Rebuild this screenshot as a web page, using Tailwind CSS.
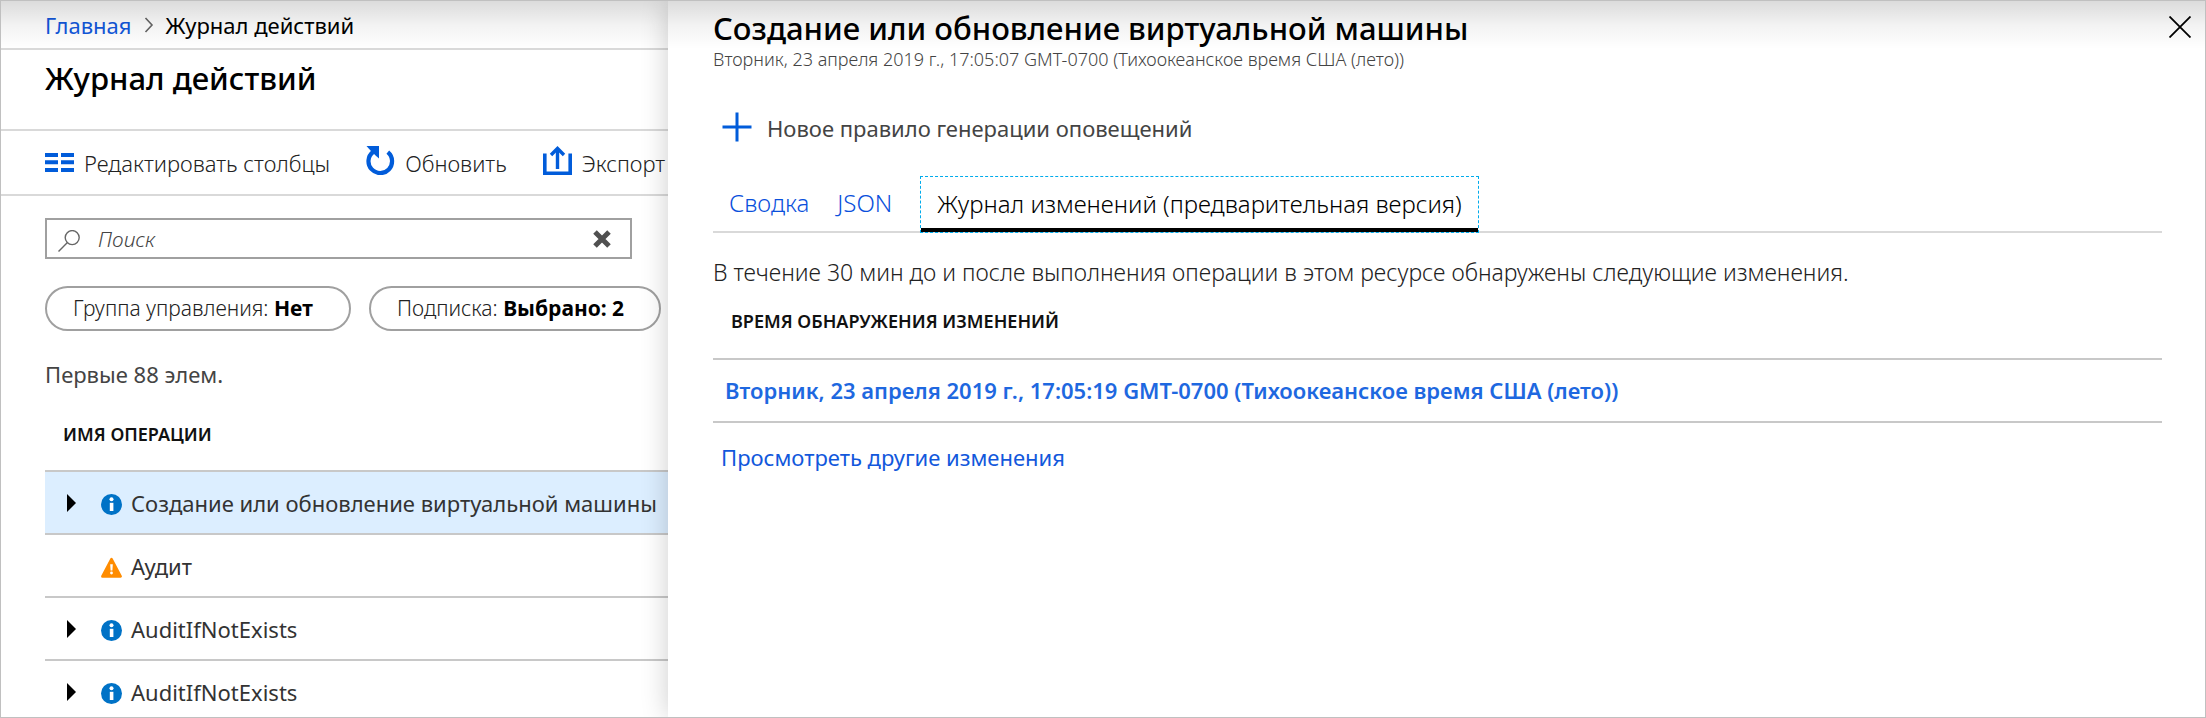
<!DOCTYPE html>
<html lang="ru">
<head>
<meta charset="utf-8">
<meta name="viewport" content="width=device-width, initial-scale=1">
<title>Журнал действий</title>
<script src="https://cdn.jsdelivr.net/npm/@tailwindcss/browser@4"></script>
</head>
<body class="bg-white font-['Noto_Sans','Open_Sans',sans-serif] text-[22px] leading-8 text-[#444]">
<svg class="hidden" aria-hidden="true">
  <symbol id="info" viewBox="0 0 21 21"><circle cx="10.5" cy="10.5" r="10.5" fill="#0072c6"/><circle cx="10.5" cy="5.3" r="2" fill="#fff"/><path d="M8.8 8.8h3.6v8.2H8.800z" fill="#fff"/></symbol>
  <symbol id="warn" viewBox="0 0 21 21"><path d="M10.5 2.2 19.6 19.4H1.400z" fill="#ff8c00" stroke="#ff8c00" stroke-width="2.6" stroke-linejoin="round"/><path d="M9.2 7.2h2.600l-.4 6.400H9.600z" fill="#fff"/><circle cx="10.5" cy="16" r="1.4" fill="#fff"/></symbol>
  <symbol id="expand" viewBox="0 0 9 18"><path d="M0 0 9 9 0 18z" fill="#000"/></symbol>
</svg>
<div class="relative flex h-screen overflow-hidden border border-[#c0c0c0]">

  <main class="w-[667px] shrink-0 overflow-hidden whitespace-nowrap">
    <nav class="flex h-[49px] items-center border-b-2 border-[#d9d9d9] pl-11" aria-label="Навигация">
      <a href="#" class="text-[#1258dc]">Главная</a>
      <svg class="mx-3 h-4 w-2.5" viewBox="0 0 10 16" fill="none" stroke="#666" stroke-width="1.6"><path d="M1.5 1 8 8l-6.500 7"/></svg>
      <span class="text-black">Журнал действий</span>
    </nav>
    <header class="h-[81px] border-b-2 border-[#d9d9d9] pt-2 pl-11">
      <h1 class="text-[31px] leading-10 font-medium text-black">Журнал действий</h1>
    </header>
    <div class="flex h-[65px] items-center gap-9 border-b-2 border-[#d9d9d9] pl-11 font-light text-[#222]">
      <button type="button" class="flex items-center gap-2.5">
        <svg class="h-[19px] w-[29px]" viewBox="0 0 29 19" fill="#015cda"><path d="M0 0h13v4H0zM16 0h13v4H16zM0 7.300h13v4H0zM16 7.300h13v4H16zM0 15h13v4H0zM16 15h13v4H16z"/></svg>
        <span>Редактировать столбцы</span>
      </button>
      <button type="button" class="flex items-center gap-2.5">
        <svg class="mb-1 h-[29px] w-[29px]" viewBox="0 0 29 29"><path d="M21.800 6.200A11.800 11.800 0 1 1 7 6" fill="none" stroke="#015cda" stroke-width="4.200"/><path d="M.5 0H13v12.500L9.300 9.200 4.500 4.500z" fill="#015cda"/></svg>
        <span>Обновить</span>
      </button>
      <button type="button" class="flex items-center gap-2.5">
        <svg class="mb-1 h-[29px] w-[29px]" viewBox="0 0 29 29" fill="none" stroke="#015cda"><path d="M1.800 7.500v19.700h25.400V7.500" stroke-width="3.600"/><path d="M14.500 23V3" stroke-width="3.400"/><path d="m8 9 6.500-6.500L21 9" stroke-width="3.400"/></svg>
        <span>Экспорт</span>
      </button>
    </div>

    <div class="pt-[22px] pl-11">
      <div class="flex h-[41px] w-[587px] items-center border-2 border-[#a0a0a0] pl-[11px] pr-[19px]">
        <svg class="mt-1 h-[22px] w-[22px] shrink-0" viewBox="0 0 22 22" fill="none" stroke="#666" stroke-width="1.400"><circle cx="14.200" cy="7.600" r="7"/><path d="m9.200 12.700-8.700 8.800"/></svg>
        <input type="text" aria-label="Поиск" placeholder="Поиск" class="ml-[18px] min-w-0 flex-1 bg-transparent text-[21px] leading-8 font-light italic outline-none placeholder:text-[#444]">
        <button type="button" aria-label="Очистить"><svg class="h-[18px] w-[18px]" viewBox="0 0 18 18" stroke="#505050" stroke-width="5"><path d="m2 2 14 14M16 2 2 16"/></svg></button>
      </div>

      <div class="mt-[27px] flex gap-[18px] text-[21px] font-light text-[#222]">
        <button type="button" class="h-[45px] w-[306px] rounded-full border-2 border-[#a0a0a0] pb-0.5 pl-[26px] text-left">Группа управления: <b class="font-bold text-black">Нет</b></button>
        <button type="button" class="h-[45px] w-[292px] rounded-full border-2 border-[#a0a0a0] pb-0.5 pl-[26px] text-left">Подписка: <b class="font-bold text-black">Выбрано: 2</b></button>
      </div>

      <p class="mt-[27px]">Первые 88 элем.</p>

      <table class="mt-2 w-full border-collapse">
        <thead>
          <tr class="h-[73px] border-b-2 border-[#c8c8c8]"><th scope="col" class="pl-[18px] text-left text-lg font-semibold text-[#111]">ИМЯ ОПЕРАЦИИ</th></tr>
        </thead>
        <tbody class="text-[#333]">
          <tr class="h-[63px] border-b-2 border-[#c8c8c8] bg-[#dceeff]"><td>
            <div class="flex items-center pl-[22px]"><button type="button" aria-label="Развернуть" class="w-[34px]"><svg class="h-[18px] w-[9px]"><use href="#expand"/></svg></button><svg class="mt-1 mr-[9px] h-[21px] w-[21px] shrink-0"><use href="#info"/></svg>Создание или обновление виртуальной машины</div>
          </td></tr>
          <tr class="h-[63px] border-b-2 border-[#c8c8c8]"><td>
            <div class="flex items-center pl-14"><svg class="mt-1 mr-[9px] h-[21px] w-[21px] shrink-0"><use href="#warn"/></svg>Аудит</div>
          </td></tr>
          <tr class="h-[63px] border-b-2 border-[#c8c8c8]"><td>
            <div class="flex items-center pl-[22px]"><button type="button" aria-label="Развернуть" class="w-[34px]"><svg class="h-[18px] w-[9px]"><use href="#expand"/></svg></button><svg class="mt-1 mr-[9px] h-[21px] w-[21px] shrink-0"><use href="#info"/></svg>AuditIfNotExists</div>
          </td></tr>
          <tr class="h-[63px] border-b-2 border-[#c8c8c8]"><td>
            <div class="flex items-center pl-[22px]"><button type="button" aria-label="Развернуть" class="w-[34px]"><svg class="h-[18px] w-[9px]"><use href="#expand"/></svg></button><svg class="mt-1 mr-[9px] h-[21px] w-[21px] shrink-0"><use href="#info"/></svg>AuditIfNotExists</div>
          </td></tr>
        </tbody>
      </table>
    </div>
  </main>

  <section class="relative min-w-0 flex-1 bg-white shadow-[0_0_26px_rgba(0,0,0,0.2)]">
    <header class="flex items-start justify-between pt-[7px] pr-[14px] pl-[45px]">
      <div>
        <h2 class="text-[31px] leading-10 font-medium text-black">Создание или обновление виртуальной машины</h2>
        <p class="text-lg leading-[22px] font-light text-[#444]">Вторник, 23 апреля 2019 г., 17:05:07 GMT-0700 (Тихоокеанское время США (лето))</p>
      </div>
      <button type="button" aria-label="Закрыть" class="mt-2"><svg class="h-[22px] w-[22px]" viewBox="0 0 22 22" stroke="#000" stroke-width="1.800"><path d="m.5.5 21 21M21.500.5l-21 21"/></svg></button>
    </header>

    <div class="pr-[43px] pl-[45px]">
      <button type="button" class="mt-[38px] flex h-10 items-center gap-[15px] pl-[9px]">
        <svg class="mb-[3px] h-[30px] w-[30px]" viewBox="0 0 30 30" stroke="#015cda" stroke-width="3"><path d="M15 .5v29M.5 15h29"/></svg>
        Новое правило генерации оповещений
      </button>

      <div role="tablist" class="mt-7 flex h-[57px] border-b-2 border-[#d9d9d9] text-2xl font-light">
        <button type="button" role="tab" class="h-14 pb-0.5 pl-4 pr-7 text-[#0a50dc]">Сводка</button>
        <button type="button" role="tab" class="h-14 pb-0.5 pr-7 text-[#0a50dc]">JSON</button>
        <button type="button" role="tab" aria-selected="true" class="h-[57px] border border-dashed border-[#00abec] px-4 pb-0.5 text-black shadow-[inset_0_-4px_0_#000]">Журнал изменений (предварительная версия)</button>
      </div>

      <p class="mt-[23px] text-[23px] font-light text-[#222]">В течение 30 мин до и после выполнения операции в этом ресурсе обнаружены следующие изменения.</p>

      <table class="w-full border-collapse">
        <thead>
          <tr class="h-[71px] border-b-2 border-[#c8c8c8]"><th scope="col" class="pb-1 pl-[18px] text-left text-lg font-semibold text-[#111]">ВРЕМЯ ОБНАРУЖЕНИЯ ИЗМЕНЕНИЙ</th></tr>
        </thead>
        <tbody>
          <tr class="h-[63px] border-b-2 border-[#c8c8c8]"><td class="pb-0.5 pl-3"><a href="#" class="block font-semibold text-[#1e68e0]">Вторник, 23 апреля 2019 г., 17:05:19 GMT-0700 (Тихоокеанское время США (лето))</a></td></tr>
        </tbody>
      </table>
      <a href="#" class="mt-[18px] ml-2 inline-block text-[#1258dc]">Просмотреть другие изменения</a>
    </div>
  </section>

  <!-- Shade under the window's top edge -->
  <div class="pointer-events-none absolute inset-x-0 top-0 h-12 bg-linear-to-b from-black/14 via-black/5 to-transparent"></div>
</div>
</body>
</html>
